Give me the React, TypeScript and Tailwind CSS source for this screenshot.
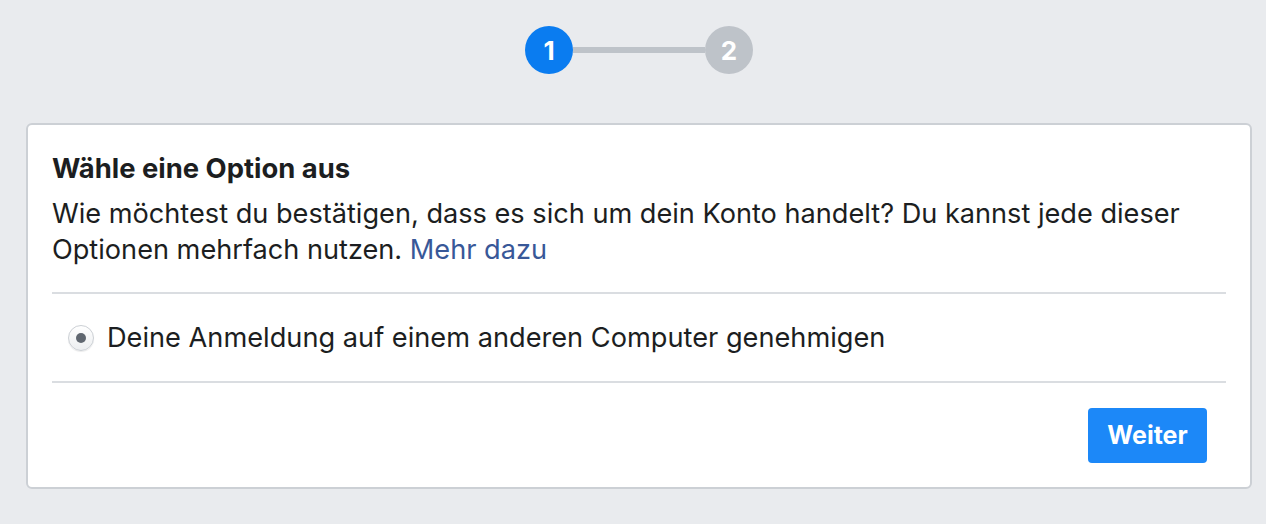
export default function App() {
  return (
    <div className="min-h-[524px] w-full bg-[#e9ebee] pt-[26px] pl-[26px] pr-[14px]" style={{ fontFamily: 'Inter, "Noto Sans", sans-serif' }}>
      <div className="flex items-center justify-center">
        <div className="flex h-[48px] w-[48px] items-center justify-center rounded-full bg-[#0a7cf0] text-[26px] font-bold text-white">1</div>
        <div className="h-[6px] w-[132px] bg-[#bec3c9]" />
        <div className="flex h-[48px] w-[48px] items-center justify-center rounded-full bg-[#bec3c9] text-[26px] font-bold text-white">2</div>
      </div>
      <div className="mt-[49px] h-[366px] rounded-[6px] border-2 border-[#ccd0d5] bg-white px-[24px] pt-[27px]">
        <h2 className="text-[27.4px] font-bold leading-[32px] text-[#1c1e21]">Wähle eine Option aus</h2>
        <p className="mt-[12px] text-[27.15px] leading-[36px] text-[#1c1e21]">
          Wie möchtest du bestätigen, dass es sich um dein Konto handelt? Du kannst jede dieser Optionen mehrfach nutzen.{' '}
          <a className="text-[#385898]">Mehr dazu</a>
        </p>
        <div className="mt-[24px] border-t-2 border-[#dadde1]" />
        <label className="flex h-[87px] items-center pl-[16px]">
          <span className="flex h-[26px] w-[26px] items-center justify-center rounded-full border border-[#ccd0d5] bg-gradient-to-b from-white to-[#eceef0] shadow-[0_1px_1px_rgba(0,0,0,0.08)]">
            <span className="h-[10px] w-[10px] rounded-full bg-[#606770]" />
          </span>
          <span className="ml-[13px] text-[27.2px] leading-[36px] text-[#1c1e21]">Deine Anmeldung auf einem anderen Computer genehmigen</span>
        </label>
        <div className="border-t-2 border-[#dadde1]" />
        <div className="flex justify-end pt-[25px]">
          <button className="mr-[19px] h-[55px] w-[119px] rounded-[4px] bg-[#1c88f8] text-[25px] font-bold text-white">Weiter</button>
        </div>
      </div>
    </div>
  );
}
